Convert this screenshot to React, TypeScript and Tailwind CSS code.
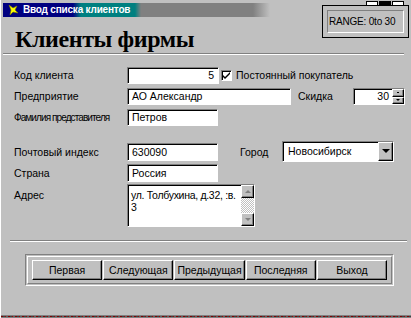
import React from 'react';

const sunken =
  'bg-white border-t border-l border-t-[#808080] border-l-[#808080] border-b border-r border-b-white border-r-white shadow-[inset_1px_1px_0_#000]';

const raised =
  'bg-[#c0c0c0] border-t border-l border-t-white border-l-white border-b border-r border-b-black border-r-black shadow-[inset_-1px_-1px_0_#808080]';

function Field({ w, h = 17, value, right }: { w: number; h?: number; value: string; right?: boolean }) {
  return (
    <div
      className={`${sunken} flex items-center px-[4px] text-[10.5px] leading-none text-black ${right ? 'justify-end' : ''}`}
      style={{ width: w, height: h }}
    >
      {value}
    </div>
  );
}

function Label({ children, className = '' }: { children: React.ReactNode; className?: string }) {
  return <div className={`w-[113px] shrink-0 text-[10.5px] leading-none whitespace-nowrap ${className}`}>{children}</div>;
}

function TitleIcon() {
  return (
    <svg width="11" height="12" viewBox="0 0 11 12" className="shrink-0">
      <path d="M1 1 L5 4 L9 2 L7 6 L10 9 L5 8 L2 11 L3 6 Z" fill="#ffff00" stroke="#808000" strokeWidth="0.6" />
    </svg>
  );
}

export default function App() {
  const buttons = ['Первая', 'Следующая', 'Предыдущая', 'Последняя', 'Выход'];

  return (
    <div
      className="relative w-[411px] h-[318px] overflow-hidden bg-[#c0c0c0] border-l border-l-white text-black"
      style={{ fontFamily: '"Liberation Sans", Arial, sans-serif' }}
    >
      {/* title bar */}
      <div className="ml-[2px] mt-[3px] h-[14px] w-[267px] flex items-center gap-[4px] pl-[5px] bg-[linear-gradient(90deg,#000080_0px,#000080_70px,#008080_78px,#008080_132px,#808080_138px,#808080_250px,#c0c0c0_267px)]">
        <TitleIcon />
        <span className="text-[10px] font-bold text-white leading-none tracking-[-0.2px]">Ввод списка клиентов</span>
      </div>

      {/* window controls partially hidden */}
      <div className="absolute left-[365px] top-[1px] flex gap-[1px]">
        <div className="w-[12px] h-[9px] bg-white border border-black" />
        <div className="w-[12px] h-[9px] bg-black" />
        <div className="w-[12px] h-[9px] bg-white border border-black" />
      </div>

      {/* range hint */}
      <div className="absolute left-[321px] top-[5px] w-[87px] h-[33px] bg-[#c0c0c0] border border-black p-[4px]">
        <div className="h-full border border-t-[#808080] border-l-[#808080] border-b-white border-r-white flex items-center pl-[1px] text-[10px] tracking-[-0.2px] leading-none overflow-hidden whitespace-nowrap">
          RANGE: 0to 30
        </div>
      </div>

      {/* heading */}
      <div className="h-[36px] flex items-end pl-[14px]">
        <h1
          className="text-[24px] font-bold leading-none mb-[2px] tracking-[-0.4px]"
          style={{ fontFamily: '"Liberation Serif", "Times New Roman", serif' }}
        >
          Клиенты фирмы
        </h1>
      </div>
      <div className="ml-[2px] w-[401px] h-[2px] border-t border-t-[#808080] border-b border-b-white" />

      {/* form */}
      <div className="pl-[13px]">
        <div className="mt-[12px] h-[17px] flex items-center">
          <Label>Код клиента</Label>
          <Field w={92} value="5" right />
          <div className="ml-[2px] w-[11px] h-[11px] bg-white border-t border-l border-t-[#808080] border-l-[#808080] border-b border-r border-b-white border-r-white shadow-[inset_1px_1px_0_#000] flex items-center justify-center">
            <svg width="7" height="7" viewBox="0 0 7 7">
              <path d="M0 3 L2 5 L7 0 L7 2 L2 7 L0 5 Z" fill="#000" />
            </svg>
          </div>
          <span className="ml-[4px] text-[10.5px] leading-none">Постоянный покупатель</span>
        </div>

        <div className="mt-[4px] h-[17px] flex items-center">
          <Label>Предприятие</Label>
          <Field w={164} value="АО Александр" />
          <span className="ml-[7px] w-[55px] text-[10.5px] leading-none">Скидка</span>
          <div className={`${sunken} w-[52px] h-[17px] flex items-center`}>
            <span className="flex-1 text-right pr-[3px] text-[10.5px] leading-none">30</span>
            <div className="flex flex-col w-[12px] h-full">
              <div className={`${raised} h-1/2 flex items-center justify-center`}>
                <div className="w-[2px] h-[1px] bg-black" />
              </div>
              <div className={`${raised} h-1/2 flex items-center justify-center`}>
                <div className="w-0 h-0 border-l-[2px] border-r-[2px] border-t-[2px] border-l-transparent border-r-transparent border-t-black" />
              </div>
            </div>
          </div>
        </div>

        <div className="mt-[4px] h-[17px] flex items-center">
          <Label className="tracking-[-0.9px] text-[10px]">Фамилия представителя</Label>
          <Field w={91} value="Петров" />
        </div>

        <div className="mt-[17px] h-[18px] flex items-center">
          <Label>Почтовый индекс</Label>
          <Field w={91} h={18} value="630090" />
          <span className="ml-[22px] w-[42px] text-[10.5px] leading-none">Город</span>
          <div className={`${sunken} w-[112px] h-[21px] -mt-[2px] flex items-center`}>
            <span className="flex-1 pl-[5px] text-[10.5px] leading-none">Новосибирск</span>
            <div className={`${raised} w-[15px] h-full flex items-center justify-center`}>
              <div className="w-0 h-0 border-l-[4px] border-r-[4px] border-t-[4px] border-l-transparent border-r-transparent border-t-black" />
            </div>
          </div>
        </div>

        <div className="mt-[3px] h-[18px] flex items-center">
          <Label>Страна</Label>
          <Field w={91} h={18} value="Россия" />
        </div>

        <div className="mt-[2px] h-[43px] flex items-start">
          <Label className="pt-[6px]">Адрес</Label>
          <div className={`${sunken} w-[128px] h-[43px] flex`}>
            <div className="flex-1 pl-[3px] pt-[4px] text-[10.5px] leading-[12px] tracking-[-0.3px]">
              ул. Толбухина, д.32, :в.
              <br />
              3
            </div>
            <div className="w-[13px] h-full flex flex-col">
              <div className={`${raised} h-[13px] flex items-center justify-center`}>
                <div className="w-0 h-0 border-l-[3px] border-r-[3px] border-b-[3px] border-l-transparent border-r-transparent border-b-[#808080]" />
              </div>
              <div className="flex-1 bg-[repeating-conic-gradient(#ffffff_0_25%,#c0c0c0_0_50%)] bg-[length:2px_2px]" />
              <div className={`${raised} h-[13px] flex items-center justify-center`}>
                <div className="w-0 h-0 border-l-[3px] border-r-[3px] border-t-[3px] border-l-transparent border-r-transparent border-t-[#808080]" />
              </div>
            </div>
          </div>
        </div>
      </div>

      {/* separator */}
      <div className="mt-[13px] ml-[9px] w-[397px] h-[2px] border-t border-t-[#808080] border-b border-b-white" />

      {/* navigation panel */}
      <div className="mt-[12px] ml-[24px] w-[369px] h-[32px] border border-t-[#808080] border-l-[#808080] border-b-white border-r-white p-[1px]">
        <div className="w-full h-full border border-t-white border-l-white border-b-[#808080] border-r-[#808080] px-[4px] py-[3px] flex gap-[1px]">
          {buttons.map((b) => (
            <button
              key={b}
              className={`${raised} flex-1 h-full text-[10.5px] leading-none text-black`}
            >
              {b}
            </button>
          ))}
        </div>
      </div>

      {/* bottom edge */}
      <div className="absolute left-0 bottom-0 w-full h-[3px] bg-[#808080]">
        <div className="mt-[1px] h-[1px] bg-[repeating-linear-gradient(90deg,#800000_0_2px,#404040_2px_4px,#a00000_4px_5px,#606060_5px_7px)]" />
      </div>
    </div>
  );
}
